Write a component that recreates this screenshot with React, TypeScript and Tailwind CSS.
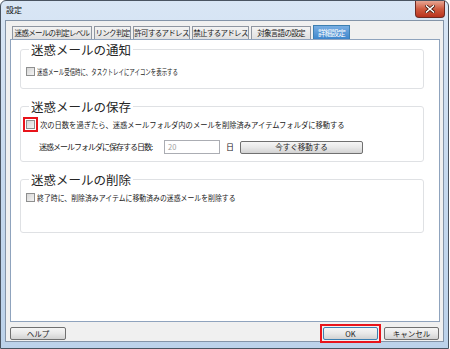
import React from 'react';

const jp = "font-['Noto_Sans_CJK_JP','Noto_Sans',sans-serif]";

const tabs = [
  { label: '迷惑メールの判定レベル', w: 'w-[80px]' },
  { label: 'リンク判定', w: 'w-[37px]' },
  { label: '許可するアドレス', w: 'w-[57px]' },
  { label: '禁止するアドレス', w: 'w-[57px]' },
  { label: '対象言語の設定', w: 'w-[60px]' },
];

function Check({ marked }: { marked?: boolean }) {
  const box = (
    <span className="block w-[9px] h-[9px] border border-[#8e8f8f] bg-gradient-to-br from-[#d6d6d6] to-[#f4f4f4]" />
  );
  if (!marked) return <span className="shrink-0">{box}</span>;
  return (
    <span className="shrink-0 -m-[3px] border-2 border-[#e8141b] p-px">{box}</span>
  );
}

function WinButton({ children, w, primary }: { children: React.ReactNode; w: string; primary?: boolean }) {
  return (
    <div
      className={`${w} h-[13px] rounded-[2px] border ${
        primary ? 'border-[#3c7fb1]' : 'border-[#707070]'
      } bg-gradient-to-b from-[#f6f6f6] via-[#e8e8e8] to-[#d2d2d2] flex items-center justify-center text-[7.5px] leading-none text-[#222]`}
    >
      {children}
    </div>
  );
}

function Group({ title, children, className }: { title: string; children: React.ReactNode; className?: string }) {
  return (
    <fieldset className={`border border-[#dfe1e4] rounded-[3px] ${className ?? ''}`}>
      <legend className="ml-[3px] px-[2px] text-[12.5px] leading-[13px] text-[#262626]">{title}</legend>
      {children}
    </fieldset>
  );
}

export default function App() {
  return (
    <div className={`w-[450px] h-[349px] overflow-hidden bg-white ${jp}`}>
      <div className="w-[449px] h-[349px] rounded-t-[6px] border border-[#4a5461] bg-gradient-to-b from-[#d9e6f5] via-[#c6d9ee] to-[#bcd2ea] flex flex-col">
        {/* title bar */}
        <div className="h-[19px] flex items-start justify-between pl-[5px] pr-[3px] shrink-0">
          <span className="mt-[3px] text-[8px] leading-[11px] text-[#111]">設定</span>
          <div className="w-[30px] h-[17px] rounded-b-[4px] border border-t-0 border-[#6d2a22] bg-gradient-to-b from-[#e6a593] via-[#cf5a3f] to-[#b9321d] flex items-center justify-center">
            <svg width="10" height="8" viewBox="0 0 10 8">
              <path d="M1.5 1 L8.5 7 M8.5 1 L1.5 7" stroke="#3b1208" strokeWidth="3" strokeLinecap="square" />
              <path d="M1.5 1 L8.5 7 M8.5 1 L1.5 7" stroke="#ffffff" strokeWidth="1.6" strokeLinecap="square" />
            </svg>
          </div>
        </div>

        {/* client */}
        <div className="mx-[4px] mb-[6px] flex-1 border border-[#8494a8] bg-[#f0f0f0] flex flex-col">
          {/* tab strip */}
          <div className="mt-[3px] ml-[6px] flex items-end gap-[2px] h-[15px] text-[7.5px] leading-none text-[#1b1b1b]">
            {tabs.map((t) => (
              <div
                key={t.label}
                className={`${t.w} h-[13px] border border-b-0 border-[#8f96a1] bg-gradient-to-b from-[#f3f3f3] to-[#e0e0e0] flex items-center justify-center whitespace-nowrap tracking-[-0.7px]`}
              >
                {t.label}
              </div>
            ))}
            <div className="w-[37px] h-[14px] border border-b-0 border-[#3c7fb1] bg-gradient-to-b from-[#78aee3] to-[#3d86cc] text-white flex items-center justify-center whitespace-nowrap tracking-[-0.7px]">
              詳細設定
            </div>
          </div>

          {/* tab panel */}
          <div className="ml-[4px] mr-[3px] h-[283px] border border-[#8fa3bd] bg-white pt-[3px] pl-[9px] pr-[15px] flex flex-col">
            <Group title="迷惑メールの通知" className="h-[46px] pl-[5px] pt-[11px]">
              <div className="flex items-center gap-[2px] text-[8px] leading-none text-[#222]">
                <Check />
                <span className="inline-block whitespace-nowrap origin-left scale-x-[0.68]">迷惑メール受信時に、タスクトレイにアイコンを表示する</span>
              </div>
            </Group>

            <Group title="迷惑メールの保存" className="mt-[11px] h-[62px] pl-[5px] pt-[7px]">
              <div className="flex items-center gap-[2px] text-[8px] leading-none text-[#222]">
                <Check marked />
                <span className="ml-[3px] inline-block whitespace-nowrap origin-left scale-x-[0.91]">次の日数を過ぎたら、迷惑メールフォルダ内のメールを削除済みアイテムフォルダに移動する</span>
              </div>
              <div className="mt-[11px] ml-[13px] flex items-center text-[8px] leading-none text-[#222]">
                <span className="w-[125px] whitespace-nowrap tracking-[-1px]">迷惑メールフォルダに保存する日数:</span>
                <div className="w-[56px] h-[14px] border border-[#abadb3] bg-white flex items-center pl-[3px] text-[#a0a0a0] text-[7.5px]">20</div>
                <span className="ml-[6px]">日</span>
                <div className="ml-[6px]">
                  <WinButton w="w-[123px]">今すぐ移動する</WinButton>
                </div>
              </div>
            </Group>

            <Group title="迷惑メールの削除" className="mt-[11px] h-[60px] pl-[5px] pt-[7px]">
              <div className="flex items-center gap-[2px] text-[8px] leading-none text-[#222]">
                <Check />
                <span className="inline-block whitespace-nowrap origin-left scale-x-[0.86]">終了時に、削除済みアイテムに移動済みの迷惑メールを削除する</span>
              </div>
            </Group>
          </div>

          {/* buttons */}
          <div className="mt-[5px] pl-[4px] pr-[4px] flex items-center">
            <WinButton w="w-[56px]">ヘルプ</WinButton>
            <div className="ml-auto -my-[4px] border-2 border-[#e8141b] p-px">
              <WinButton w="w-[55px]" primary>OK</WinButton>
            </div>
            <div className="ml-[3px]">
              <WinButton w="w-[55px]">キャンセル</WinButton>
            </div>
          </div>
        </div>
      </div>
    </div>
  );
}
